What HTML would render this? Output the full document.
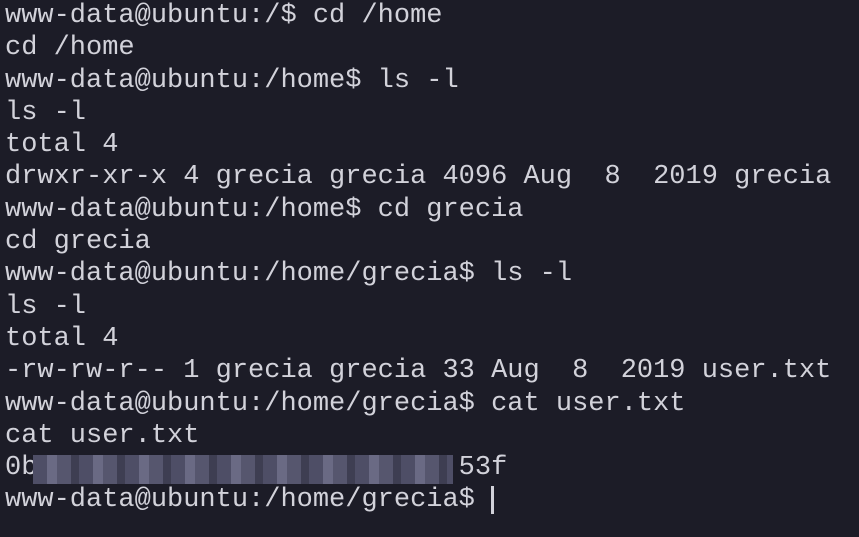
<!DOCTYPE html>
<html><head><style>
html,body{margin:0;padding:0;background:#1c1c27;width:859px;height:537px;overflow:hidden}
pre{margin:0;padding:0 0 0 5px;font-family:"Liberation Mono","DejaVu Sans Mono",monospace;font-size:27px;line-height:32.3px;color:#d2d2da;position:relative;top:0px;letter-spacing:0px}
.blur{position:absolute;left:33px;top:455px;width:420px;height:29px;background:repeating-linear-gradient(90deg,#4e4e66 0 14px,#6a6a84 14px 24px,#56566e 24px 38px,#3e3e52 38px 46px)}
.cur{position:absolute;left:491px;top:486px;width:3px;height:28px;background:#d2d2da}
</style></head><body>
<pre>www-data@ubuntu:/$ cd /home
cd /home
www-data@ubuntu:/home$ ls -l
ls -l
total 4
drwxr-xr-x 4 grecia grecia 4096 Aug  8  2019 grecia
www-data@ubuntu:/home$ cd grecia
cd grecia
www-data@ubuntu:/home/grecia$ ls -l
ls -l
total 4
-rw-rw-r-- 1 grecia grecia 33 Aug  8  2019 user.txt
www-data@ubuntu:/home/grecia$ cat user.txt
cat user.txt
0b                          53f
www-data@ubuntu:/home/grecia$ </pre>
<div class="blur"></div>
<div class="cur"></div>
</body></html>
